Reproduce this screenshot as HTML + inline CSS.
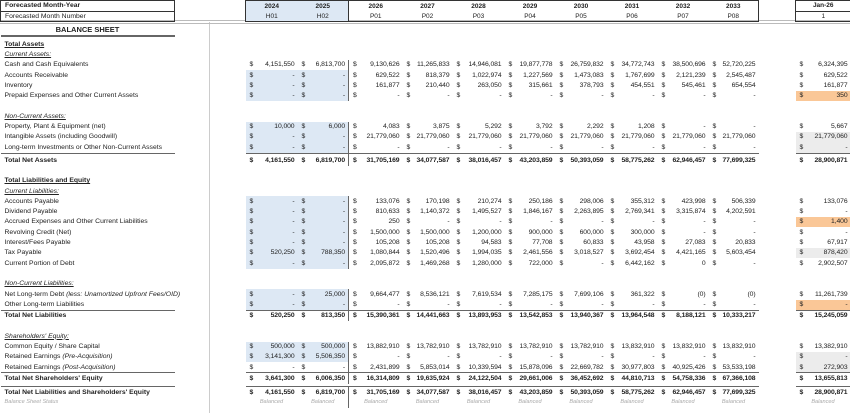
<!DOCTYPE html><html><head><style>
body{margin:0;width:850px;height:413px;overflow:hidden;background:#fff;font-family:"Liberation Sans",sans-serif;font-size:6.8px;color:#222;position:relative}
table{border-collapse:collapse;table-layout:fixed;position:absolute;left:0;top:0;width:850px}
td{padding:0;white-space:nowrap;overflow:hidden;height:10.3px;line-height:9.5px}
td.l{padding-left:4px;overflow:visible}
td.n{text-align:right;padding-right:3px;letter-spacing:-0.1px}
td.n i{float:left;font-style:normal;padding-left:4px}
.b td{font-weight:bold}
.t td.l,.t td.n{border-top:1.5px solid #666}
.t td.g{border-top:none}
.u{font-style:italic;text-decoration:underline}
.bl{background:#dde8f4}
.or{background:#fac797}
.gr{background:#ececec}
.d{border-left:1.5px solid #666}
.h td{height:9.5px;line-height:9px;font-size:6.5px;text-align:center}
.st td{font-style:italic;color:#aaa;font-size:5.6px;text-align:center}
.vb td{vertical-align:bottom}
</style></head><body>
<div style="position:absolute;left:209px;top:22px;width:1px;height:391px;background:#ccc"></div>
<div style="position:absolute;left:0;top:20px;width:850px;height:2px;border-top:1px solid #bbb;border-bottom:1px solid #bbb"></div>
<table>
<colgroup><col style="width:174px"><col style="width:71px"><col style="width:52px"><col style="width:51px"><col style="width:54px"><col style="width:50px"><col style="width:52px"><col style="width:51px"><col style="width:51px"><col style="width:51px"><col style="width:51px"><col style="width:50px"><col style="width:37px"><col style="width:55px"></colgroup>
<tr class="h" style="font-weight:bold"><td class="l" style="text-align:left;border:1px solid #333;font-size:6.8px">Forecasted Month-Year</td><td></td><td class="bl" style="border-top:1px solid #333;border-left:1px solid #333">2024</td><td class="bl" style="border-top:1px solid #333">2025</td><td style="border-top:1px solid #333;border-left:1px solid #333">2026</td><td style="border-top:1px solid #333">2027</td><td style="border-top:1px solid #333">2028</td><td style="border-top:1px solid #333">2029</td><td style="border-top:1px solid #333">2030</td><td style="border-top:1px solid #333">2031</td><td style="border-top:1px solid #333">2032</td><td style="border-top:1px solid #333;border-right:1px solid #333">2033</td><td></td><td style="border:1px solid #333;border-right:none">Jan-26</td></tr>
<tr class="h"><td class="l" style="text-align:left;border:1px solid #333;font-size:6.8px">Forecasted Month Number</td><td></td><td class="bl" style="border-bottom:1px solid #333;border-left:1px solid #333">H01</td><td class="bl" style="border-bottom:1px solid #333">H02</td><td style="border-bottom:1px solid #333;border-left:1px solid #333">P01</td><td style="border-bottom:1px solid #333">P02</td><td style="border-bottom:1px solid #333">P03</td><td style="border-bottom:1px solid #333">P04</td><td style="border-bottom:1px solid #333">P05</td><td style="border-bottom:1px solid #333">P06</td><td style="border-bottom:1px solid #333">P07</td><td style="border-bottom:1px solid #333;border-right:1px solid #333">P08</td><td></td><td style="border:1px solid #333;border-right:none">1</td></tr>
<tr><td colspan="14" style="height:3px"></td></tr>
<tr class="b"><td style="text-align:center;border-bottom:2px solid #666;font-size:7.5px">BALANCE SHEET</td><td colspan="13"></td></tr>
<tr><td colspan="14" style="height:2px"></td></tr>
<tr class="b"><td class="l" style="text-decoration:underline">Total Assets</td><td colspan="13"></td></tr>
<tr><td class="l u">Current Assets:</td><td colspan="13"></td></tr>
<tr><td class="l">Cash and Cash Equivalents</td><td></td><td class="n"><i>$</i>4,151,550</td><td class="n"><i>$</i>6,813,700</td><td class="n d"><i>$</i>9,130,626</td><td class="n"><i>$</i>11,265,833</td><td class="n"><i>$</i>14,946,081</td><td class="n"><i>$</i>19,877,778</td><td class="n"><i>$</i>26,759,832</td><td class="n"><i>$</i>34,772,743</td><td class="n"><i>$</i>38,500,696</td><td class="n"><i>$</i>52,720,225</td><td></td><td class="n"><i>$</i>6,324,395</td></tr>
<tr><td class="l">Accounts Receivable</td><td></td><td class="n bl"><i>$</i>-</td><td class="n bl"><i>$</i>-</td><td class="n d"><i>$</i>629,522</td><td class="n"><i>$</i>818,379</td><td class="n"><i>$</i>1,022,974</td><td class="n"><i>$</i>1,227,569</td><td class="n"><i>$</i>1,473,083</td><td class="n"><i>$</i>1,767,699</td><td class="n"><i>$</i>2,121,239</td><td class="n"><i>$</i>2,545,487</td><td></td><td class="n"><i>$</i>629,522</td></tr>
<tr><td class="l">Inventory</td><td></td><td class="n bl"><i>$</i>-</td><td class="n bl"><i>$</i>-</td><td class="n d"><i>$</i>161,877</td><td class="n"><i>$</i>210,440</td><td class="n"><i>$</i>263,050</td><td class="n"><i>$</i>315,661</td><td class="n"><i>$</i>378,793</td><td class="n"><i>$</i>454,551</td><td class="n"><i>$</i>545,461</td><td class="n"><i>$</i>654,554</td><td></td><td class="n"><i>$</i>161,877</td></tr>
<tr><td class="l">Prepaid Expenses and Other Current Assets</td><td></td><td class="n bl"><i>$</i>-</td><td class="n bl"><i>$</i>-</td><td class="n d"><i>$</i>-</td><td class="n"><i>$</i>-</td><td class="n"><i>$</i>-</td><td class="n"><i>$</i>-</td><td class="n"><i>$</i>-</td><td class="n"><i>$</i>-</td><td class="n"><i>$</i>-</td><td class="n"><i>$</i>-</td><td></td><td class="n or"><i>$</i>350</td></tr>
<tr><td colspan="14"></td></tr>
<tr><td class="l u">Non-Current Assets:</td><td colspan="13"></td></tr>
<tr><td class="l">Property, Plant &amp; Equipment (net)</td><td></td><td class="n bl"><i>$</i>10,000</td><td class="n bl"><i>$</i>6,000</td><td class="n d"><i>$</i>4,083</td><td class="n"><i>$</i>3,875</td><td class="n"><i>$</i>5,292</td><td class="n"><i>$</i>3,792</td><td class="n"><i>$</i>2,292</td><td class="n"><i>$</i>1,208</td><td class="n"><i>$</i>-</td><td class="n"><i>$</i>-</td><td></td><td class="n"><i>$</i>5,667</td></tr>
<tr><td class="l">Intangible Assets (including Goodwill)</td><td></td><td class="n bl"><i>$</i>-</td><td class="n bl"><i>$</i>-</td><td class="n d"><i>$</i>21,779,060</td><td class="n"><i>$</i>21,779,060</td><td class="n"><i>$</i>21,779,060</td><td class="n"><i>$</i>21,779,060</td><td class="n"><i>$</i>21,779,060</td><td class="n"><i>$</i>21,779,060</td><td class="n"><i>$</i>21,779,060</td><td class="n"><i>$</i>21,779,060</td><td></td><td class="n gr"><i>$</i>21,779,060</td></tr>
<tr><td class="l">Long-term Investments or Other Non-Current Assets</td><td></td><td class="n bl"><i>$</i>-</td><td class="n bl"><i>$</i>-</td><td class="n d"><i>$</i>-</td><td class="n"><i>$</i>-</td><td class="n"><i>$</i>-</td><td class="n"><i>$</i>-</td><td class="n"><i>$</i>-</td><td class="n"><i>$</i>-</td><td class="n"><i>$</i>-</td><td class="n"><i>$</i>-</td><td></td><td class="n gr"><i>$</i>-</td></tr>
<tr class="b t vb"><td class="l" style="height:12px">Total Net Assets</td><td class="g"></td><td class="n"><i>$</i>4,161,550</td><td class="n"><i>$</i>6,819,700</td><td class="n d"><i>$</i>31,705,169</td><td class="n"><i>$</i>34,077,587</td><td class="n"><i>$</i>38,016,457</td><td class="n"><i>$</i>43,203,859</td><td class="n"><i>$</i>50,393,059</td><td class="n"><i>$</i>58,775,262</td><td class="n"><i>$</i>62,946,457</td><td class="n"><i>$</i>77,699,325</td><td class="g"></td><td class="n"><i>$</i>28,900,871</td></tr>
<tr><td colspan="14"></td></tr>
<tr class="b"><td class="l" style="text-decoration:underline">Total Liabilities and Equity</td><td colspan="13"></td></tr>
<tr><td class="l u">Current Liabilities:</td><td colspan="13"></td></tr>
<tr><td class="l">Accounts Payable</td><td></td><td class="n bl"><i>$</i>-</td><td class="n bl"><i>$</i>-</td><td class="n d"><i>$</i>133,076</td><td class="n"><i>$</i>170,198</td><td class="n"><i>$</i>210,274</td><td class="n"><i>$</i>250,186</td><td class="n"><i>$</i>298,006</td><td class="n"><i>$</i>355,312</td><td class="n"><i>$</i>423,998</td><td class="n"><i>$</i>506,339</td><td></td><td class="n"><i>$</i>133,076</td></tr>
<tr><td class="l">Dividend Payable</td><td></td><td class="n bl"><i>$</i>-</td><td class="n bl"><i>$</i>-</td><td class="n d"><i>$</i>810,633</td><td class="n"><i>$</i>1,140,372</td><td class="n"><i>$</i>1,495,527</td><td class="n"><i>$</i>1,846,167</td><td class="n"><i>$</i>2,263,895</td><td class="n"><i>$</i>2,769,341</td><td class="n"><i>$</i>3,315,874</td><td class="n"><i>$</i>4,202,591</td><td></td><td class="n"><i>$</i>-</td></tr>
<tr><td class="l">Accrued Expenses and Other Current Liabilities</td><td></td><td class="n bl"><i>$</i>-</td><td class="n bl"><i>$</i>-</td><td class="n d"><i>$</i>250</td><td class="n"><i>$</i>-</td><td class="n"><i>$</i>-</td><td class="n"><i>$</i>-</td><td class="n"><i>$</i>-</td><td class="n"><i>$</i>-</td><td class="n"><i>$</i>-</td><td class="n"><i>$</i>-</td><td></td><td class="n or"><i>$</i>1,400</td></tr>
<tr><td class="l">Revolving Credit (Net)</td><td></td><td class="n bl"><i>$</i>-</td><td class="n bl"><i>$</i>-</td><td class="n d"><i>$</i>1,500,000</td><td class="n"><i>$</i>1,500,000</td><td class="n"><i>$</i>1,200,000</td><td class="n"><i>$</i>900,000</td><td class="n"><i>$</i>600,000</td><td class="n"><i>$</i>300,000</td><td class="n"><i>$</i>-</td><td class="n"><i>$</i>-</td><td></td><td class="n"><i>$</i>-</td></tr>
<tr><td class="l">Interest/Fees Payable</td><td></td><td class="n bl"><i>$</i>-</td><td class="n bl"><i>$</i>-</td><td class="n d"><i>$</i>105,208</td><td class="n"><i>$</i>105,208</td><td class="n"><i>$</i>94,583</td><td class="n"><i>$</i>77,708</td><td class="n"><i>$</i>60,833</td><td class="n"><i>$</i>43,958</td><td class="n"><i>$</i>27,083</td><td class="n"><i>$</i>20,833</td><td></td><td class="n"><i>$</i>67,917</td></tr>
<tr><td class="l">Tax Payable</td><td></td><td class="n bl"><i>$</i>520,250</td><td class="n bl"><i>$</i>788,350</td><td class="n d"><i>$</i>1,080,844</td><td class="n"><i>$</i>1,520,496</td><td class="n"><i>$</i>1,994,035</td><td class="n"><i>$</i>2,461,556</td><td class="n"><i>$</i>3,018,527</td><td class="n"><i>$</i>3,692,454</td><td class="n"><i>$</i>4,421,165</td><td class="n"><i>$</i>5,603,454</td><td></td><td class="n gr"><i>$</i>878,420</td></tr>
<tr><td class="l">Current Portion of Debt</td><td></td><td class="n bl"><i>$</i>-</td><td class="n bl"><i>$</i>-</td><td class="n d"><i>$</i>2,095,872</td><td class="n"><i>$</i>1,469,268</td><td class="n"><i>$</i>1,280,000</td><td class="n"><i>$</i>722,000</td><td class="n"><i>$</i>-</td><td class="n"><i>$</i>6,442,162</td><td class="n"><i>$</i>0</td><td class="n"><i>$</i>-</td><td></td><td class="n"><i>$</i>2,902,507</td></tr>
<tr><td colspan="14" style="height:10.5px"></td></tr>
<tr><td class="l u">Non-Current Liabilities:</td><td colspan="13"></td></tr>
<tr><td class="l">Net Long-term Debt <i>(less: Unamortized Upfront Fees/OID)</i></td><td></td><td class="n bl"><i>$</i>-</td><td class="n bl"><i>$</i>25,000</td><td class="n d"><i>$</i>9,664,477</td><td class="n"><i>$</i>8,536,121</td><td class="n"><i>$</i>7,619,534</td><td class="n"><i>$</i>7,285,175</td><td class="n"><i>$</i>7,699,106</td><td class="n"><i>$</i>361,322</td><td class="n"><i>$</i>(0)</td><td class="n"><i>$</i>(0)</td><td></td><td class="n"><i>$</i>11,261,739</td></tr>
<tr><td class="l">Other Long-term Liabilities</td><td></td><td class="n bl"><i>$</i>-</td><td class="n bl"><i>$</i>-</td><td class="n d"><i>$</i>-</td><td class="n"><i>$</i>-</td><td class="n"><i>$</i>-</td><td class="n"><i>$</i>-</td><td class="n"><i>$</i>-</td><td class="n"><i>$</i>-</td><td class="n"><i>$</i>-</td><td class="n"><i>$</i>-</td><td></td><td class="n or"><i>$</i>-</td></tr>
<tr class="b t"><td class="l">Total Net Liabilities</td><td class="g"></td><td class="n"><i>$</i>520,250</td><td class="n"><i>$</i>813,350</td><td class="n d"><i>$</i>15,390,361</td><td class="n"><i>$</i>14,441,663</td><td class="n"><i>$</i>13,893,953</td><td class="n"><i>$</i>13,542,853</td><td class="n"><i>$</i>13,940,367</td><td class="n"><i>$</i>13,964,548</td><td class="n"><i>$</i>8,188,121</td><td class="n"><i>$</i>10,333,217</td><td class="g"></td><td class="n"><i>$</i>15,245,059</td></tr>
<tr><td colspan="14" style="height:10px"></td></tr>
<tr><td class="l u">Shareholders' Equity:</td><td colspan="13"></td></tr>
<tr><td class="l">Common Equity / Share Capital</td><td></td><td class="n bl"><i>$</i>500,000</td><td class="n bl"><i>$</i>500,000</td><td class="n d"><i>$</i>13,882,910</td><td class="n"><i>$</i>13,782,910</td><td class="n"><i>$</i>13,782,910</td><td class="n"><i>$</i>13,782,910</td><td class="n"><i>$</i>13,782,910</td><td class="n"><i>$</i>13,832,910</td><td class="n"><i>$</i>13,832,910</td><td class="n"><i>$</i>13,832,910</td><td></td><td class="n"><i>$</i>13,382,910</td></tr>
<tr><td class="l">Retained Earnings <i>(Pre-Acquisition)</i></td><td></td><td class="n bl"><i>$</i>3,141,300</td><td class="n bl"><i>$</i>5,506,350</td><td class="n d"><i>$</i>-</td><td class="n"><i>$</i>-</td><td class="n"><i>$</i>-</td><td class="n"><i>$</i>-</td><td class="n"><i>$</i>-</td><td class="n"><i>$</i>-</td><td class="n"><i>$</i>-</td><td class="n"><i>$</i>-</td><td></td><td class="n gr"><i>$</i>-</td></tr>
<tr><td class="l">Retained Earnings <i>(Post-Acquisition)</i></td><td></td><td class="n"><i>$</i>-</td><td class="n"><i>$</i>-</td><td class="n d"><i>$</i>2,431,899</td><td class="n"><i>$</i>5,853,014</td><td class="n"><i>$</i>10,339,594</td><td class="n"><i>$</i>15,878,096</td><td class="n"><i>$</i>22,669,782</td><td class="n"><i>$</i>30,977,803</td><td class="n"><i>$</i>40,925,426</td><td class="n"><i>$</i>53,533,198</td><td></td><td class="n gr"><i>$</i>272,903</td></tr>
<tr class="b t"><td class="l">Total Net Shareholders' Equity</td><td class="g"></td><td class="n"><i>$</i>3,641,300</td><td class="n"><i>$</i>6,006,350</td><td class="n d"><i>$</i>16,314,809</td><td class="n"><i>$</i>19,635,924</td><td class="n"><i>$</i>24,122,504</td><td class="n"><i>$</i>29,661,006</td><td class="n"><i>$</i>36,452,692</td><td class="n"><i>$</i>44,810,713</td><td class="n"><i>$</i>54,758,336</td><td class="n"><i>$</i>67,366,108</td><td class="g"></td><td class="n"><i>$</i>13,655,813</td></tr>
<tr><td colspan="14" style="height:2.5px"></td></tr>
<tr class="b t"><td class="l">Total Net Liabilities and Shareholders' Equity</td><td class="g"></td><td class="n"><i>$</i>4,161,550</td><td class="n"><i>$</i>6,819,700</td><td class="n d"><i>$</i>31,705,169</td><td class="n"><i>$</i>34,077,587</td><td class="n"><i>$</i>38,016,457</td><td class="n"><i>$</i>43,203,859</td><td class="n"><i>$</i>50,393,059</td><td class="n"><i>$</i>58,775,262</td><td class="n"><i>$</i>62,946,457</td><td class="n"><i>$</i>77,699,325</td><td class="g"></td><td class="n"><i>$</i>28,900,871</td></tr>
<tr class="st"><td class="l" style="text-align:left">Balance Sheet Status</td><td></td><td>Balanced</td><td>Balanced</td><td class="d">Balanced</td><td>Balanced</td><td>Balanced</td><td>Balanced</td><td>Balanced</td><td>Balanced</td><td>Balanced</td><td>Balanced</td><td></td><td>Balanced</td></tr>
</table>
</body></html>
